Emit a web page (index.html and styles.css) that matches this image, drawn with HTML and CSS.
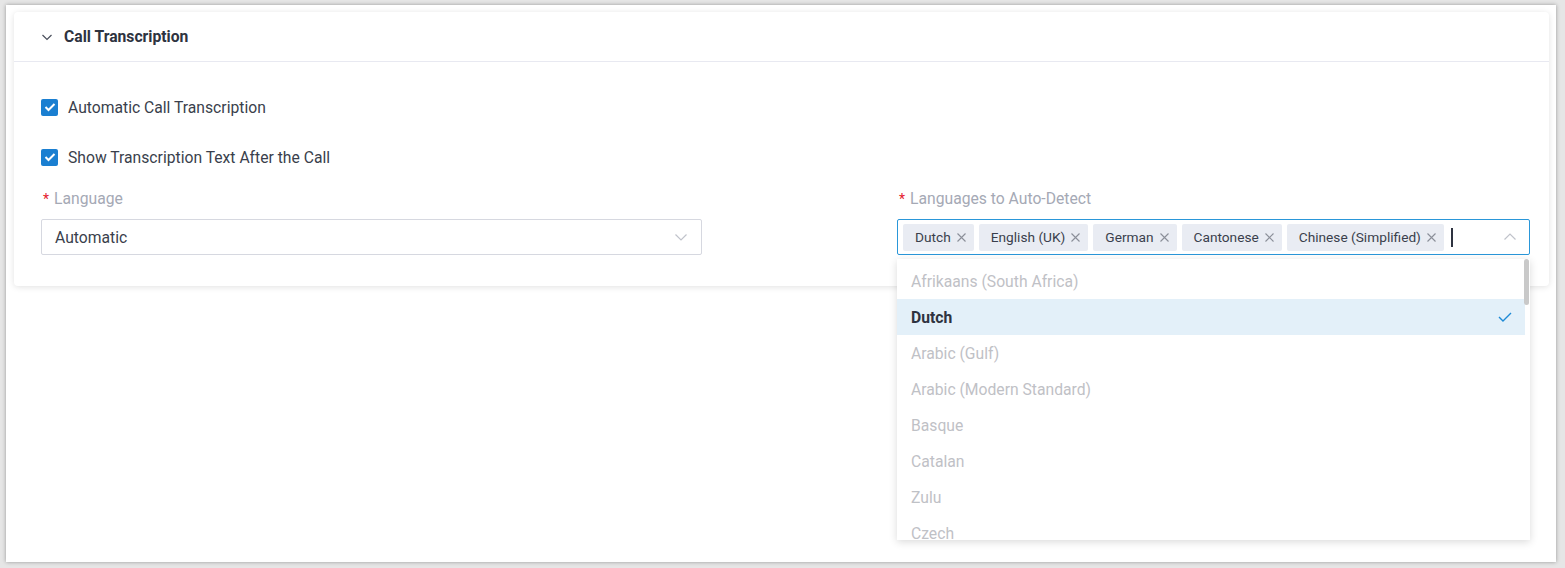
FILE: index.html
```html
<!DOCTYPE html>
<html>
<head>
<meta charset="utf-8">
<link rel="stylesheet" href="styles.css">
</head>
<body>
<div class="frame">
  <div class="card">
    <div class="card-head">
      <svg class="chev" width="12" height="12" viewBox="0 0 12 12"><path d="M1.5 4 L6 8.5 L10.5 4" fill="none" stroke="#4a4f5c" stroke-width="1.2"/></svg>
      <span class="title">Call Transcription</span>
    </div>
    <div class="card-body">
      <label class="check">
        <span class="box"><svg width="12" height="10" viewBox="0 0 12 10"><path d="M1.5 5 L4.5 8 L10.5 2" fill="none" stroke="#fff" stroke-width="2"/></svg></span>
        <span>Automatic Call Transcription</span>
      </label>
      <label class="check">
        <span class="box"><svg width="12" height="10" viewBox="0 0 12 10"><path d="M1.5 5 L4.5 8 L10.5 2" fill="none" stroke="#fff" stroke-width="2"/></svg></span>
        <span>Show Transcription Text After the Call</span>
      </label>
      <div class="fields">
        <div class="field left">
          <div class="label"><span class="req">*</span>Language</div>
          <div class="select">
            <span>Automatic</span>
            <svg width="14" height="14" viewBox="0 0 14 14"><path d="M1.5 4.5 L7 10 L12.5 4.5" fill="none" stroke="#c0c3cb" stroke-width="1.2"/></svg>
          </div>
        </div>
        <div class="field right">
          <div class="label"><span class="req">*</span>Languages to Auto-Detect</div>
          <div class="select-wrap">
            <div class="select multi">
              <div class="tags">
                <span class="tag">Dutch<svg class="x" width="9" height="9" viewBox="0 0 9 9"><path d="M0.5 0.5 L8.5 8.5 M8.5 0.5 L0.5 8.5" stroke="#8b8f99" stroke-width="1.1"/></svg></span>
                <span class="tag">English (UK)<svg class="x" width="9" height="9" viewBox="0 0 9 9"><path d="M0.5 0.5 L8.5 8.5 M8.5 0.5 L0.5 8.5" stroke="#8b8f99" stroke-width="1.1"/></svg></span>
                <span class="tag">German<svg class="x" width="9" height="9" viewBox="0 0 9 9"><path d="M0.5 0.5 L8.5 8.5 M8.5 0.5 L0.5 8.5" stroke="#8b8f99" stroke-width="1.1"/></svg></span>
                <span class="tag">Cantonese<svg class="x" width="9" height="9" viewBox="0 0 9 9"><path d="M0.5 0.5 L8.5 8.5 M8.5 0.5 L0.5 8.5" stroke="#8b8f99" stroke-width="1.1"/></svg></span>
                <span class="tag">Chinese (Simplified)<svg class="x" width="9" height="9" viewBox="0 0 9 9"><path d="M0.5 0.5 L8.5 8.5 M8.5 0.5 L0.5 8.5" stroke="#8b8f99" stroke-width="1.1"/></svg></span>
                <span class="caret"></span>
              </div>
              <svg width="14" height="14" viewBox="0 0 14 14"><path d="M1.5 9.5 L7 4 L12.5 9.5" fill="none" stroke="#c0c3cb" stroke-width="1.2"/></svg>
            </div>
            <div class="dropdown">
              <ul>
                <li>Afrikaans (South Africa)</li>
                <li class="sel">Dutch<svg width="14" height="12" viewBox="0 0 14 12"><path d="M1 6 L5 10 L13 2" fill="none" stroke="#1e8ad6" stroke-width="1.4"/></svg></li>
                <li>Arabic (Gulf)</li>
                <li>Arabic (Modern Standard)</li>
                <li>Basque</li>
                <li>Catalan</li>
                <li>Zulu</li>
                <li>Czech</li>
              </ul>
              <div class="scroll"></div>
            </div>
          </div>
        </div>
      </div>
    </div>
  </div>
</div>
</body>
</html>
```

FILE: styles.css
```css
* { box-sizing: border-box; }
html, body { margin: 0; padding: 0; }
body {
  background: #e6e6e6;
  font-family: Roboto, "Liberation Sans", sans-serif;
  color: #3a3f4c;
  width: 1565px;
  height: 568px;
  overflow: hidden;
  padding: 5px 9px 6px 6px;
}
.frame {
  background: #fff;
  width: 1550px;
  height: 557px;
  box-shadow: 0 0 4px rgba(0,0,0,0.35);
  padding: 7px 7px 0 8px;
}
.card {
  background: #fff;
  border-radius: 4px;
  box-shadow: 0 1px 6px rgba(0,0,0,0.12);
  height: 274px;
}
.card-head {
  height: 50px;
  border-bottom: 1px solid #e8e9f1;
  display: flex;
  align-items: center;
  padding-left: 27px;
}
.chev { margin-right: 11px; margin-top: 0; }
.title {
  font-size: 15.7px;
  font-weight: 700;
  color: #2e3340;
  margin-top: -1px;
}
.card-body {
  padding: 28px 19px 0 27px;
}
.check {
  display: flex;
  align-items: center;
  font-size: 15.7px;
  height: 34px;
  margin-bottom: 16px;
}
.check:nth-child(2) { margin-bottom: 15px; }
.box {
  width: 17px;
  height: 17px;
  border-radius: 2px;
  background: #1a7fd1;
  display: flex;
  align-items: center;
  justify-content: center;
  margin-right: 10px;
}
.fields {
  display: flex;
  justify-content: space-between;
}
.field { position: relative; }
.field.left { width: 661px; }
.field.right { width: 633px; }
.label {
  font-size: 15.7px;
  color: #a5a9b5;
  height: 20px;
  line-height: 20px;
  margin-bottom: 10px;
}
.req {
  color: #e5202e;
  margin-right: 5px;
  margin-left: 2px;
  font-size: 14px;
}
.select-wrap { position: relative; }
.select {
  height: 36px;
  border: 1px solid #d6d8e0;
  border-radius: 2px;
  display: flex;
  align-items: center;
  justify-content: space-between;
  padding: 0 13px 0 13px;
  font-size: 15.7px;
}
.select.multi {
  border-color: #2a97d9;
  padding: 0 12px 0 5px;
}
.tags {
  display: flex;
  align-items: center;
  gap: 5px;
}
.tag {
  background: #e9ecf3;
  border-radius: 2px;
  height: 27px;
  display: flex;
  align-items: center;
  padding: 0 8px 0 12px;
  font-size: 13.7px;
  color: #3a3f4c;
}
.tag .x { margin-left: 6px; }
.caret {
  width: 2px;
  height: 19px;
  background: #2e3340;
  margin-left: 2px;
}
.dropdown {
  position: absolute;
  left: 0;
  top: 40px;
  width: 633px;
  height: 281px;
  background: #fff;
  box-shadow: 0 2px 8px rgba(0,0,0,0.15);
  overflow: hidden;
}
.dropdown ul {
  list-style: none;
  margin: 0;
  padding: 4px 5px 0 0;
}
.dropdown li {
  height: 36px;
  display: flex;
  align-items: center;
  justify-content: space-between;
  padding: 0 13px 0 14px;
  font-size: 15.7px;
  color: #bfc1c6;
}
.dropdown li.sel {
  background: #e3f0f9;
  color: #2e3340;
  font-weight: 700;
}
.scroll {
  position: absolute;
  right: 1px;
  top: 0;
  width: 5px;
  height: 46px;
  border-radius: 3px;
  background: #c9c9c9;
}
```
